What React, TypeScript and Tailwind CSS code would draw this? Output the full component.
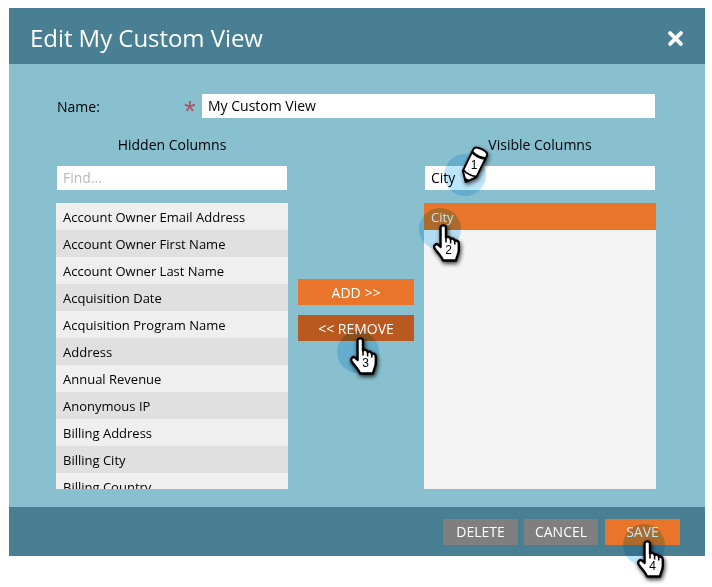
const hiddenColumns = [
  'Account Owner Email Address',
  'Account Owner First Name',
  'Account Owner Last Name',
  'Acquisition Date',
  'Acquisition Program Name',
  'Address',
  'Annual Revenue',
  'Anonymous IP',
  'Billing Address',
  'Billing City',
  'Billing Country',
];

function Hand({ n, className }: { n: number; className: string }) {
  return (
    <svg
      viewBox="0 0 27 39"
      className={`absolute h-[39px] w-[27px] drop-shadow-[1px_2px_2px_rgba(0,0,0,0.8)] ${className}`}
    >
      <path
        d="M7.5 3.8C7.5 .6 13 .6 13 3.8L13 13.5C14.5 12.2 17 12.8 17.6 15C19 13.8 21.4 14.6 21.8 16.8C23.2 16 25.8 16.8 25.8 19.6L25.8 26C25.8 30 23.8 32 23 36.5L10 36.5C9 33 5 29 1.8 24.8C-.2 22 3 18.8 5.3 20.8L7.6 23Z"
        fill="#fff"
        stroke="#000"
        strokeWidth="2.4"
        strokeLinejoin="round"
      />
      <path d="M13 13.5V18.5M17.6 15V19.5M21.8 16.8V20.5" stroke="#000" strokeWidth="1.5" fill="none" />
      <text x="15.5" y="30" textAnchor="middle" fontSize="12" fontFamily="Liberation Sans, sans-serif" fill="#000">
        {n}
      </text>
    </svg>
  );
}

function Pencil({ className }: { className: string }) {
  return (
    <svg
      viewBox="0 0 32 40"
      className={`absolute h-[40px] w-[32px] drop-shadow-[1px_2px_2px_rgba(0,0,0,0.7)] ${className}`}
    >
      <g transform="rotate(26 16 20)">
        <path
          d="M8.5 6C8.5 1 23.5 1 23.5 6L23.5 30L16 39L8.5 30Z"
          fill="#fff"
          stroke="#000"
          strokeWidth="2"
          strokeLinejoin="round"
        />
        <path d="M8.5 9C12 11 20 11 23.5 9" fill="none" stroke="#000" strokeWidth="2.6" />
        <path d="M8.5 29C12 31 20 31 23.5 29" fill="none" stroke="#000" strokeWidth="1.6" />
        <path d="M13.5 36L16 39L18.5 36Z" fill="#000" stroke="#000" />
      </g>
      <text x="16" y="24" textAnchor="middle" fontSize="12" fontFamily="Liberation Sans, sans-serif" fill="#000">
        1
      </text>
    </svg>
  );
}

function Spot({ className }: { className: string }) {
  return <div className={`absolute h-[42px] w-[42px] rounded-full bg-[#bce6fc] mix-blend-multiply ${className}`} />;
}

export default function App() {
  return (
    <div className="relative h-[587px] w-[712px] overflow-hidden bg-white pl-[9px] pt-[8px] font-['Open_Sans',sans-serif] text-[13px] text-black">
      <div className="w-[696px]">
        <div className="flex h-[56px] items-center justify-between bg-[#487f92] pl-[21px] pr-[22px] pt-[4px]">
          <h1 className="text-[24px] font-medium leading-[32px] tracking-[-0.05px] text-white">Edit My Custom View</h1>
          <svg viewBox="0 0 14 14" className="h-[15px] w-[15px]">
            <path d="M2 2L12 12M12 2L2 12" stroke="#fff" strokeWidth="3.6" strokeLinecap="round" />
          </svg>
        </div>

        <div className="h-[443px] bg-[#88c0cf] pl-[47px] pr-[49px] pt-[30px]">
          <div className="flex h-[24px] items-center pl-px">
            <label className="w-[127px] text-[14px]">Name:</label>
            <span className="h-[24px] w-[18px] font-['Liberation_Sans',sans-serif] text-[30px] leading-[34px] text-[#b5505c]">*</span>
            <input
              readOnly
              value="My Custom View"
              className="h-[24px] w-[453px] bg-white px-[6px] pb-[2px] text-[14px] outline-none"
            />
          </div>

          <div className="mt-[17px] flex gap-[10px]">
            <div className="w-[232px]">
              <div className="mb-[11px] h-[20px] text-center text-[14px] leading-[20px]">Hidden Columns</div>
              <input
                readOnly
                placeholder="Find..."
                className="mx-px h-[24px] w-[230px] bg-white px-[6px] pb-[2px] text-[14px] outline-none placeholder:text-[#b8b8b8]"
              />
              <div className="mt-[13px] h-[286px] overflow-hidden bg-[#efefef]">
                {hiddenColumns.map((name, i) => (
                  <div
                    key={name}
                    className={`h-[27px] px-[7px] leading-[29px] ${i % 2 === 1 ? 'bg-[#e0e0e0]' : 'bg-[#efefef]'}`}
                  >
                    {name}
                  </div>
                ))}
              </div>
            </div>

            <div className="w-[116px] pt-[144px]">
              <button className="block h-[26px] w-full bg-[#e9752b] text-[14px] font-medium text-white">{'ADD >>'}</button>
              <button className="mt-[10px] block h-[26px] w-full bg-[#b9591f] text-[14px] font-medium text-white">{'<< REMOVE'}</button>
            </div>

            <div className="w-[232px]">
              <div className="mb-[11px] h-[20px] text-center text-[14px] leading-[20px]">Visible Columns</div>
              <input
                readOnly
                value="City"
                className="mx-px h-[24px] w-[230px] bg-white px-[6px] pb-[2px] text-[14px] outline-none"
              />
              <div className="mt-[13px] h-[286px] bg-[#f4f4f4]">
                <div className="h-[27px] bg-[#e9752b] px-[7px] leading-[29px] text-white">City</div>
              </div>
            </div>
          </div>
        </div>

        <div className="flex h-[49px] justify-end bg-[#487f92] pr-[25px] pt-[12px]">
          <button className="h-[26px] w-[75px] bg-[#7f7f7f] pb-[2px] text-[14px] font-medium text-white">DELETE</button>
          <button className="ml-[6px] h-[26px] w-[74px] bg-[#7f7f7f] pb-[2px] text-[14px] font-medium text-white">CANCEL</button>
          <button className="ml-[7px] h-[26px] w-[75px] bg-[#e9752b] pb-[2px] text-[14px] font-medium text-white">SAVE</button>
        </div>
      </div>

      <Spot className="left-[444px] top-[154px]" />
      <Spot className="left-[419px] top-[208px]" />
      <Spot className="left-[337px] top-[331px]" />
      <Spot className="left-[623px] top-[524px]" />
      <Pencil className="left-[458px] top-[145px]" />
      <Hand n={2} className="left-[433px] top-[224px]" />
      <Hand n={3} className="left-[350px] top-[337px]" />
      <Hand n={4} className="left-[637px] top-[540px]" />
    </div>
  );
}
